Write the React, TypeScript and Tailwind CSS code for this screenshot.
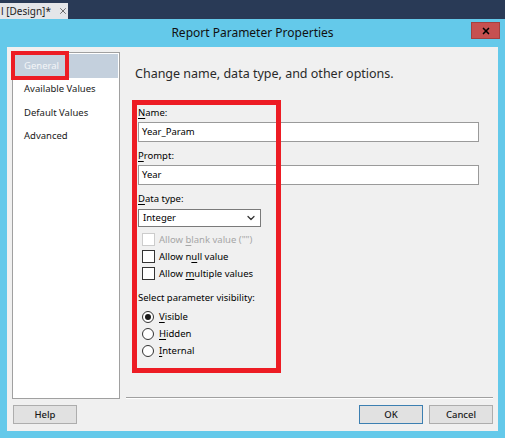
import { ChevronDown, X } from 'lucide-react';

const Access = ({ children }: { children: string }) => (
  <u className="underline underline-offset-2 decoration-1">{children}</u>
);

const Check = ({ label, disabled }: { label: React.ReactNode; disabled?: boolean }) => (
  <div className="h-[17px] flex items-center pl-[4px]">
    <span
      className={`w-[13px] h-[13px] bg-white border ${
        disabled ? 'border-[#cccccc]' : 'border-[#333333]'
      }`}
    />
    <span className={`ml-[4px] ${disabled ? 'text-[#a6a6a6]' : 'text-black'}`}>{label}</span>
  </div>
);

const Radio = ({ label, checked }: { label: React.ReactNode; checked?: boolean }) => (
  <div className="h-[17px] flex items-center pl-[4px]">
    <span className="w-[12px] h-[12px] rounded-full bg-white border border-[#333333] flex items-center justify-center">
      {checked && <span className="w-[6px] h-[6px] rounded-full bg-[#1a1a1a]" />}
    </span>
    <span className="ml-[5px]">{label}</span>
  </div>
);

const Button = ({ children, primary }: { children: string; primary?: boolean }) => (
  <button
    type="button"
    className={`w-[64px] h-[19px] bg-[#e1e1e1] border text-[9.5px] font-medium text-[#1a1a1a] flex items-center justify-center ${
      primary ? 'border-[#3c7fb1]' : 'border-[#adadad]'
    }`}
  >
    {children}
  </button>
);

const pages = ['General', 'Available Values', 'Default Values', 'Advanced'];

export default function App() {
  return (
    <div className="relative w-[505px] h-[438px] overflow-hidden bg-[#293a56] font-['Noto_Sans','Open_Sans',sans-serif] text-[9.5px] leading-[16px] text-black">
      {/* document tab strip */}
      <div className="h-[19px] flex items-end">
        <div className="h-[16px] w-[68px] bg-[#e4e6e9] flex items-center pl-[1px] text-[10px] text-[#1e1e1e] whitespace-nowrap overflow-hidden">
          <span>l [Design]*</span>
          <X className="ml-[7px] shrink-0 w-[10px] h-[10px] text-[#555]" strokeWidth={2} />
        </div>
      </div>

      {/* dialog */}
      <div className="h-[419px] bg-[#64c9ea] px-[7px] pb-[7px] flex flex-col">
        <div className="relative h-[28px] flex items-center justify-center text-[12px] text-[#111]">
          Report Parameter Properties
          <div className="absolute right-[-2px] top-[3px] w-[29px] h-[17px] bg-[#c75050] border border-[#a54040] flex items-center justify-center">
            <X className="w-[10px] h-[10px] text-black" strokeWidth={4} />
          </div>
        </div>

        <div className="flex-1 bg-[#f0f0f0] flex flex-col px-[5px] pt-[5px]">
          <div className="flex h-[347px]">
            {/* page list */}
            <div className="w-[108px] bg-white border border-[#a0a0a0] pt-[1px] px-[1px]">
              {pages.map((p, i) => (
                <div
                  key={p}
                  className={`h-[23.5px] flex items-center pl-[10px] ${
                    i === 0 ? 'bg-[#c4d0dd] text-[#f4f6f8]' : 'text-[#1a1a1a]'
                  }`}
                >
                  {p}
                </div>
              ))}
            </div>

            {/* general page */}
            <div className="flex-1 ml-[6px] flex flex-col">
              <div className="flex-1 flex flex-col pl-[12px] pr-[14px]">
                <div className="mt-[12px] -ml-[3px] text-[12.5px] leading-[20px] text-[#2a2a2a]">
                  Change name, data type, and other options.
                </div>

                <div className="mt-[21px]">
                  <Access>N</Access>ame:
                </div>
                <div className="mt-[1px] h-[20px] bg-white border border-[#9a9a9a] flex items-center pl-[3px]">
                  Year_Param
                </div>

                <div className="mt-[6px]">
                  <Access>P</Access>rompt:
                </div>
                <div className="mt-[1px] h-[20px] bg-white border border-[#9a9a9a] flex items-center pl-[3px]">
                  Year
                </div>

                <div className="mt-[6px]">
                  <Access>D</Access>ata type:
                </div>
                <div className="mt-[2px] w-[123px] h-[18px] bg-white border border-[#7a7a7a] flex items-center pl-[4px] pr-[3px]">
                  <span className="flex-1">Integer</span>
                  <ChevronDown className="w-[12px] h-[12px] text-[#333]" strokeWidth={2.5} />
                </div>

                <div className="mt-[4px] flex flex-col">
                  <Check
                    disabled
                    label={
                      <>
                        Allow <Access>b</Access>lank value ("")
                      </>
                    }
                  />
                  <Check
                    label={
                      <>
                        Allow n<Access>u</Access>ll value
                      </>
                    }
                  />
                  <Check
                    label={
                      <>
                        Allow <Access>m</Access>ultiple values
                      </>
                    }
                  />
                </div>

                <div className="mt-[8px]">Select parameter visibility:</div>
                <div className="mt-[2px] flex flex-col">
                  <Radio
                    checked
                    label={
                      <>
                        <Access>V</Access>isible
                      </>
                    }
                  />
                  <Radio
                    label={
                      <>
                        <Access>H</Access>idden
                      </>
                    }
                  />
                  <Radio
                    label={
                      <>
                        <Access>I</Access>nternal
                      </>
                    }
                  />
                </div>
              </div>
              <div className="border-t border-[#a0a0a0] border-b border-b-white" />
            </div>
          </div>

          <div className="mt-[6px] flex items-center">
            <div className="ml-[1px]">
              <Button>Help</Button>
            </div>
            <div className="ml-auto flex gap-[6px]">
              <Button primary>OK</Button>
              <Button>Cancel</Button>
            </div>
          </div>
        </div>
      </div>

      {/* red annotation boxes */}
      <div className="absolute left-[11px] top-[51px] w-[58px] h-[29px] border-[4px] border-[#ed1c24]" />
      <div className="absolute left-[132px] top-[100px] w-[149px] h-[273px] border-[5px] border-[#ed1c24]" />
    </div>
  );
}
